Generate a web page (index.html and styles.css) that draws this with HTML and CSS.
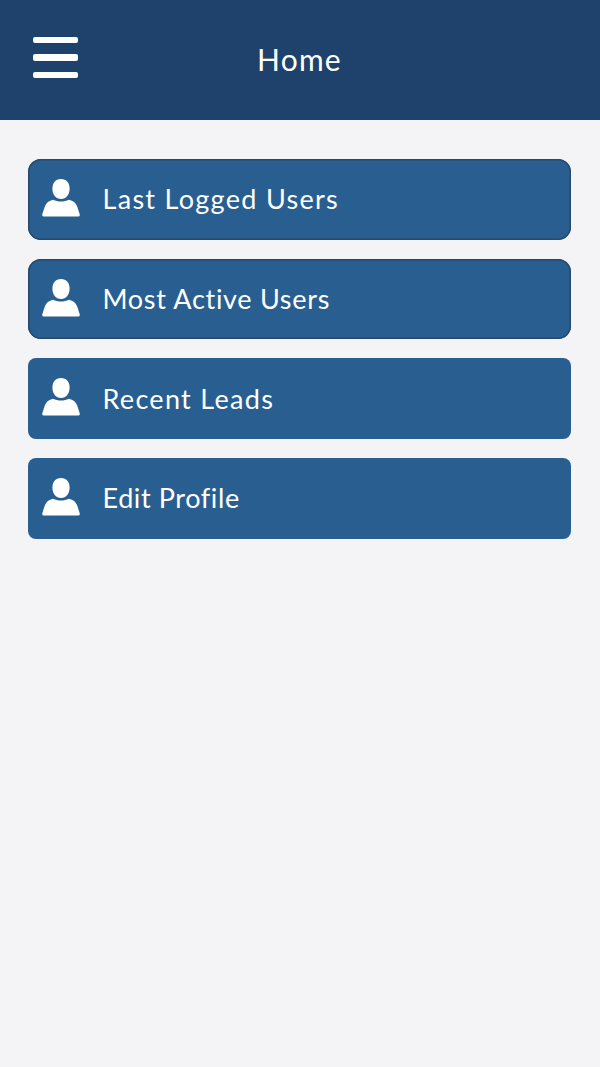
FILE: index.html
```html
<!DOCTYPE html>
<html lang="en">
<head>
<meta charset="UTF-8">
<meta name="viewport" content="width=device-width, initial-scale=1.0">
<title>Home</title>
<link rel="stylesheet" href="styles.css">
</head>
<body>
<svg width="0" height="0" class="sprite">
    <symbol id="user" viewBox="0 0 38 38">
        <path d="M19 0C24.500 0 27.600 4 27.600 9.500C27.600 15.800 24.300 20 19 20S10.400 15.800 10.400 9.500C10.400 4 13.500 0 19 0Z"/>
        <path d="M11 20.700C13.600 21.700 16 22.500 19 22.500S24.400 21.700 27 20.700C31 21.500 33.800 23.800 35.200 27.500L37.700 35.200Q38.300 37.600 36 37.600H2Q-.3 37.600.3 35.200L2.800 27.500C4.200 23.800 7 21.500 11 20.700Z"/>
    </symbol>
</svg>
<header class="topbar">
    <button class="menu-btn" aria-label="Menu">
        <span></span>
        <span></span>
        <span></span>
    </button>
    <h1>Home</h1>
</header>
<main class="menu-list">
    <a href="#" class="menu-item outlined logged">
        <svg class="icon"><use href="#user"/></svg>
        <span>Last Logged Users</span>
    </a>
    <a href="#" class="menu-item outlined active">
        <svg class="icon"><use href="#user"/></svg>
        <span>Most Active Users</span>
    </a>
    <a href="#" class="menu-item leads">
        <svg class="icon"><use href="#user"/></svg>
        <span>Recent Leads</span>
    </a>
    <a href="#" class="menu-item profile">
        <svg class="icon"><use href="#user"/></svg>
        <span>Edit Profile</span>
    </a>
</main>
</body>
</html>
```

FILE: styles.css
```css
* {
    box-sizing: border-box;
}

body {
    font-family: Lato, "Open Sans", sans-serif;
    margin: 0;
    min-height: 100vh;
    background-color: #f4f3f6;
    color: #fff;
}

.sprite {
    display: none;
}

.topbar {
    display: grid;
    grid-template-columns: 80px 1fr 80px;
    align-items: center;
    height: 120px;
    background-color: #1e426b;
}

.menu-btn {
    display: flex;
    flex-direction: column;
    gap: 11.500px;
    width: 45px;
    margin: 0 0 5px 33.400px;
    padding: 0;
    background: none;
    border: none;
    cursor: pointer;
}

.menu-btn span {
    height: 6.300px;
    width: 100%;
    border-radius: 2px;
    background-color: #fff;
}

h1 {
    margin: 0;
    padding: 0 1px 3px 0;
    font-size: 30px;
    font-weight: 400;
    line-height: 40px;
    text-align: center;
    letter-spacing: 1.200px;
}

.menu-list {
    display: flex;
    flex-direction: column;
    gap: 19.200px;
    padding: 39px 29px 0 28px;
}

.menu-item {
    display: flex;
    align-items: center;
    height: 80.500px;
    padding: 0 14px;
    border-radius: 8px;
    background-color: #295e90;
    color: #fff;
    font-size: 27px;
    line-height: 36px;
    text-decoration: none;
}

.outlined {
    border-radius: 13px;
    box-shadow: inset 0 0 0 1.500px #29496c;
}

/* tracking per label */
.logged {
    letter-spacing: 1.300px;
}

.active {
    letter-spacing: 0.700px;
}

.leads {
    letter-spacing: 1.300px;
}

.profile {
    letter-spacing: 0.600px;
}

.icon {
    width: 38px;
    height: 38px;
    margin: 0 22.500px 2.500px 0;
    fill: #fff;
}
```
